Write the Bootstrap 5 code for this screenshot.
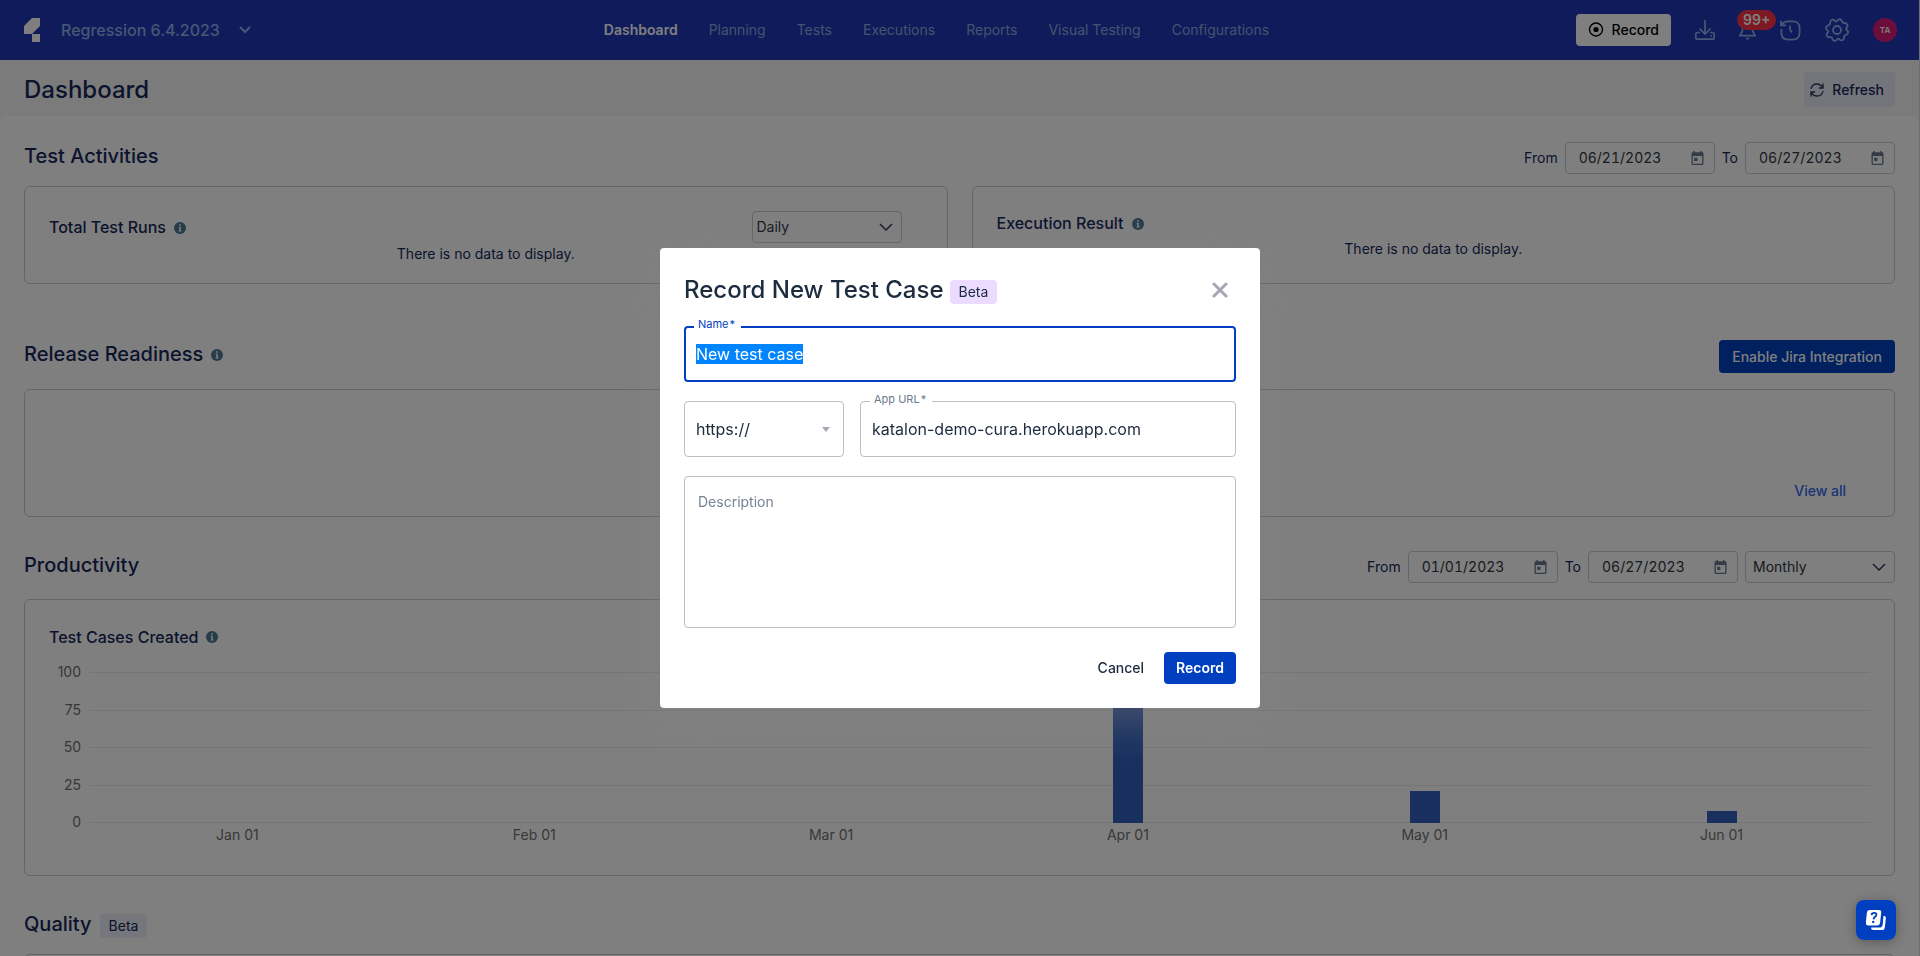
<!DOCTYPE html>
<html lang="en">
<head>
<meta charset="utf-8">
<meta name="viewport" content="width=device-width, initial-scale=1">
<title>Dashboard</title>
<link href="https://cdn.jsdelivr.net/npm/bootstrap@5.3.0/dist/css/bootstrap.min.css" rel="stylesheet">
<style>
:root { --navy: #16275a; --brand: #0040c0; --line: #c9cbd0; }
body { font-family: Inter, "Liberation Sans", sans-serif; font-size: 14px; line-height: 20px; color: var(--navy); background: #f7f7f7; }
svg { display: block; flex: none; }
h1, h2, h3 { margin: 0; font-weight: 500; color: var(--navy); }
h1 { font-size: 24px; line-height: 32px; }
h2 { font-size: 20px; line-height: 28px; }
h3 { font-size: 16px; line-height: 24px; }
.page-shell { border-right: 1px solid #d5dbe4; height: 100vh; overflow: hidden; }
.topbar { height: 60px; background: #2036b8; padding: 0 22px 0 24px; }
.side-start { flex: 1 1 0; }
.side-end { flex: 1 1 48px; gap: 24px; }
.project-btn { font-size: 16px; font-weight: 500; color: #fff; margin-left: 21px; gap: 19px; }
.topbar .nav { gap: 31px; }
.topbar .nav-link { padding: 0; color: #88a8dc; line-height: 20px; }
.topbar .nav-link.active { color: #fff; font-weight: 600; }
.icon-btn { padding: 0; border: 0; background: none; color: #8bb0e8; position: relative; }
.record-top { background: #fff; color: #000; font-weight: 500; height: 32px; padding: 0 12px; border: 0; border-radius: 4px; gap: 8px; }
.count-pill { position: absolute; left: -2px; top: -10px; background: #fd3044; color: #fff; font-size: 14px; line-height: 20px; font-weight: 600; border-radius: 10px; padding: 0 6px; }
.avatar-dot { width: 24px; height: 24px; border-radius: 50%; border: 0; background: #d81b78; color: #fff; font-size: 8px; font-weight: 600; padding: 0; }
.titlebar { height: 56px; padding: 3px 24px 0; }
.refresh-btn { height: 35px; border: 0; border-radius: 4px; background: #e8ebf5; color: var(--navy); font-weight: 500; padding: 0 11px 0 6px; gap: 8px; }
.board { background: #fff; border-radius: 6px 6px 0 0; padding: 26px 24px 0; }
.section-gap { margin-top: 34px; }
.tools { gap: 7px; }
.panel { border: 1px solid var(--line); border-radius: 6px; }
.info { color: #4f7893; }
.date-box { width: 150px; height: 32px; border: 1px solid var(--line); border-radius: 4px; padding: 0 10px 0 13px; }
.date-box input { border: 0; background: none; color: #303540; padding: 0; width: 90px; font-size: 14px; outline: 0; font-variant-numeric: tabular-nums; }
.date-box button { padding: 0; border: 0; background: none; color: #69788f; }
.pick { width: 150px; height: 32px; border: 1px solid var(--line); border-radius: 4px; color: #303540; font-size: 14px; line-height: 20px; padding: 0 7px; appearance: none; background: url("data:image/svg+xml,%3Csvg xmlns='http://www.w3.org/2000/svg' width='14' height='8' fill='none' stroke='%23303c52' stroke-width='1.5'%3E%3Cpath d='M1 1l6 6 6-6'/%3E%3C/svg%3E") no-repeat right 8px center; }
.pick-tight { padding-left: 4px; }
.jira-btn { height: 33px; border: 0; border-radius: 4px; background: var(--brand); color: #fff; font-weight: 500; padding: 0 13px; }
.activity { min-height: 98px; padding: 24px 24px 0; }
.activity-head { padding-right: 21px; margin-bottom: 1px; }
.activity h3 + svg, h2 + svg { margin-top: 2px; }
.release { height: 128px; padding: 0 48px 15px; }
.release a { color: #336af0; font-weight: 500; text-decoration: none; }
.growth { height: 277px; padding: 25px 24px; }
.chart { margin-top: 13px; color: #6b6b6b; }
.y-axis { width: 32px; height: 170px; text-align: right; line-height: 20px; color: #707070; }
.plot { margin: 10px 0 0 8px; position: relative; }
.grid-lines { position: absolute; inset: 0; height: 151px; }
.grid-lines i { height: 1px; background: #eaeaea; }
.bars { height: 151px; position: relative; }
.bars div, .x-axis span { flex: 1 1 0; text-align: center; }
.bars i { display: block; width: 30px; margin: 0 auto; background: #3260bf; }
.x-axis { padding-top: 2px; color: #707070; }
.tag { display: inline-block; border-radius: 4px; line-height: 24px; padding: 0 9px; margin-top: 3px; color: var(--navy); background: #eaeef8; }
.help-fab { position: fixed; right: 24px; bottom: 16px; z-index: 1060; width: 40px; height: 40px; border: 0; border-radius: 8px; background: var(--brand); box-shadow: 0 2px 12px rgba(0,0,0,.3); padding: 0; }
.modal-dialog { max-width: 600px; }
.modal-content { border: 0; border-radius: 4px; padding: 24px; color: #1d2b3e; box-shadow: 0 12px 48px rgba(131,131,131,.45); }
.modal-content h1 { color: #1d2b3e; }
.modal-content .tag { background: #eadbff; color: #1d2b3e; margin-left: 6px; }
.dialog-head { padding-top: 2px; margin-bottom: 20px; }
.stack { gap: 19px; }
.field { position: relative; }
.field label { position: absolute; left: 10px; top: -9px; background: #fff; padding: 0 6px 0 4px; font-size: 11px; line-height: 14px; color: #6b7b8c; }
.field label span { margin-left: 1px; }
.field input, .field select, .field textarea { display: block; width: 100%; height: 56px; border: 1px solid #bfbfbf; border-radius: 4px; padding: 0 11px; font-size: 16px; line-height: 24px; color: #1d2b3e; background: #fff; outline: 0; }
.field input:focus { border: 2px solid var(--brand); padding: 0 10px; }
.field input:focus + label { color: var(--brand); }
.field select { appearance: none; background: #fff url("data:image/svg+xml,%3Csvg xmlns='http://www.w3.org/2000/svg' width='8' height='5' fill='%23a3a8b3'%3E%3Cpath d='M0 0h8L4 5z'/%3E%3C/svg%3E") no-repeat right 13px center; }
.field textarea { height: 152px; padding: 15px 13px; font-size: 14px; line-height: 20px; resize: none; }
.field textarea::placeholder { color: #758494; opacity: 1; }
.field ::selection { background: rgba(0,133,255,.996); color: #fff; }
.scheme { width: 160px; }
.dialog-btn { height: 32px; border: 0; border-radius: 4px; font-weight: 500; padding: 0 12px; color: #1d2b3e; background: none; }
.dialog-btn.main-act { background: var(--brand); color: #fff; font-weight: 600; }
.close-x { border: 0; background: none; padding: 0; color: #a6a6b4; margin-right: 8px; }
</style>
</head>
<body class="modal-open overflow-hidden">
<svg width="0" height="0" class="position-absolute" aria-hidden="true">
  <symbol id="i-info" viewBox="0 0 12 12"><circle cx="6" cy="6" r="6" fill="currentColor"/><path fill="#fff" d="M5.2 2.3h1.6v1.5H5.2zM4.6 4.8h2.2v3.6h.7v1H4.6v-1h.7V5.800h-.7z"/></symbol>
  <symbol id="i-cal" viewBox="0 0 12 14"><path fill="currentColor" fill-rule="evenodd" d="M2 0h1.400v1.200h5.200V0H10v1.200h.7c.8 0 1.300.6 1.300 1.300v10c0 .8-.5 1.500-1.300 1.500H1.300C.5 14 0 13.300 0 12.500v-10c0-.7.5-1.300 1.300-1.300H2zM1.300 5v7.700h9.400V5zM2.700 6.800h3.200V10H2.700z"/></symbol>
</svg>

<div class="page-shell">
  <header class="topbar d-flex align-items-center">
    <div class="side-start d-flex align-items-center">
      <svg width="16" height="24" viewBox="0 0 16 24" fill="#fff" role="img" aria-label="Logo"><path d="M8 0h8v8l-8 8H0V8zM8 16h8v8H8z"/></svg>
      <button class="icon-btn project-btn d-flex align-items-center" type="button">Regression 6.4.2023
        <svg width="12" height="8" fill="none" stroke="currentColor" stroke-width="2"><path d="M1 1l5 5 5-5"/></svg></button>
    </div>
    <nav class="nav flex-nowrap" aria-label="Main">
      <a class="nav-link active" href="#">Dashboard</a>
      <a class="nav-link" href="#">Planning</a>
      <a class="nav-link" href="#">Tests</a>
      <a class="nav-link" href="#">Executions</a>
      <a class="nav-link" href="#">Reports</a>
      <a class="nav-link text-nowrap" href="#">Visual Testing</a>
      <a class="nav-link" href="#">Configurations</a>
    </nav>
    <div class="side-end d-flex align-items-center justify-content-end">
      <button class="record-top d-flex align-items-center" type="button">
        <svg width="16" height="16" fill="none" stroke="#000" stroke-width="1.400"><circle cx="8" cy="7.500" r="6.500"/><circle cx="8" cy="7.500" r="2.600" fill="#000" stroke="none"/></svg>Record</button>
      <button class="icon-btn" type="button" aria-label="Downloads"><svg width="20" height="20" viewBox="0 0 20 20" fill="none" stroke="currentColor" stroke-width="1.700"><path d="M10 0v13.500M4.500 8.500 10 14l5.500-5.500M5 12.500H2.500c-1 0-1.700.7-1.700 1.700v3.300c0 1 .7 1.700 1.700 1.700h15c1 0 1.700-.7 1.700-1.700v-3.300c0-1-.7-1.700-1.700-1.700H15M15.500 16h1.500"/></svg></button>
      <button class="icon-btn" type="button" aria-label="Notifications"><svg width="17" height="20" viewBox="0 0 17 20" fill="none" stroke="currentColor" stroke-width="1.700"><path d="M8.500 1C5.500 1 3.500 3.200 3.500 6v4.500L1 15.700h15l-2.500-5.200V6c0-2.800-2-5-5-5z"/><path d="M6 17.800h5L8.500 20z" fill="currentColor" stroke="none"/></svg><span class="count-pill">99+</span></button>
      <button class="icon-btn" type="button" aria-label="History"><svg width="21" height="21" viewBox="0 0 21 21" fill="none" stroke="currentColor" stroke-width="1.800"><path d="M1.400 9V13c0 4 2.500 6.600 6.600 6.600h5c4 0 6.600-2.600 6.600-6.600V8c0-4-2.600-6.600-6.600-6.600H8C5.500 1.400 3.300 2.400 1.800 4.700M1 .8v4.500h5M10 5.500v3.800c0 1.300.5 2 2 3"/></svg></button>
      <button class="icon-btn" type="button" aria-label="Settings"><svg width="24" height="24" viewBox="0 0 24 24" fill="none" stroke="currentColor" stroke-width="1.800"><circle cx="12" cy="12" r="4"/><path d="M9.600 2.600C8 .7 5 2.200 5.200 4.600 5.300 6.600 4.300 7.200 3 7.500.6 8.300.4 11 2.200 12c1.400.9 1.400 1.800.2 3-1.700 1.700-.3 4.700 2.300 4.200 1.700-.3 2.500.3 2.800 1.700.6 2.300 3.200 2.600 4.500.7.900-1.200 1.600-1.200 2.700 0 1.700 1.700 4.500.5 4.300-2.200-.1-1.700.5-2.200 2-2.500 2.300-.6 2.900-3.200 1-4.700-1.300-1-1.300-1.600-.2-2.700C23.500 7.700 22 5 19.700 5c-2.200 0-2.600-.8-3-2.200-.7-2-3.300-2-4.300-.3-.9 1.300-1.800 1.300-2.800.1z"/></svg></button>
      <button class="avatar-dot" type="button">TA</button>
    </div>
  </header>

  <div class="titlebar d-flex align-items-center justify-content-between">
    <h1>Dashboard</h1>
    <button class="refresh-btn d-flex align-items-center" type="button"><svg width="14" height="14" viewBox="0 0 14 14" fill="none" stroke="#303c58" stroke-width="1.400"><path d="M1 6C1.500 3 4 1 7 1c2 0 4 1 5.500 3.200M13 .5V5H8.800M13 8c-.5 3-3 5-6 5-2 0-4-1-5.500-3.200M1 13.500V9h4.200"/></svg>Refresh</button>
  </div>

  <main class="board">
    <section>
      <div class="d-flex justify-content-between">
        <h2>Test Activities</h2>
        <div class="tools d-flex align-items-center">
          <label for="act-from">From</label>
          <div class="date-box d-flex align-items-center justify-content-between"><input id="act-from" value="06/21/2023"><button type="button" aria-label="Pick start date"><svg width="13" height="14"><use href="#i-cal"/></svg></button></div>
          <label for="act-to">To</label>
          <div class="date-box d-flex align-items-center justify-content-between"><input id="act-to" value="06/27/2023"><button type="button" aria-label="Pick end date"><svg width="13" height="14"><use href="#i-cal"/></svg></button></div>
        </div>
      </div>
      <div class="row gx-4 mt-2 pt-1">
        <div class="col-6"><div class="panel activity">
          <div class="activity-head d-flex justify-content-between">
            <div class="d-flex align-items-center gap-2"><h3>Total Test Runs</h3><svg class="info" width="12" height="12"><use href="#i-info"/></svg></div>
            <select class="pick pick-tight" aria-label="Total test runs period"><option>Daily</option><option>Weekly</option></select>
          </div>
          <div class="text-center">There is no data to display.</div>
        </div></div>
        <div class="col-6"><div class="panel activity">
          <div class="d-flex align-items-center gap-2 mb-1"><h3>Execution Result</h3><svg class="info" width="12" height="12"><use href="#i-info"/></svg></div>
          <div class="text-center">There is no data to display.</div>
        </div></div>
      </div>
    </section>

    <section class="mt-5 pt-2">
      <div class="d-flex justify-content-between align-items-start">
        <div class="d-flex align-items-center gap-2"><h2>Release Readiness</h2><svg class="info" width="12" height="12"><use href="#i-info"/></svg></div>
        <button class="jira-btn" type="button">Enable Jira Integration</button>
      </div>
      <div class="panel release d-flex justify-content-end align-items-end mt-3"><a href="#">View all</a></div>
    </section>

    <section class="section-gap">
      <div class="d-flex justify-content-between align-items-start">
        <h2>Productivity</h2>
        <div class="tools d-flex align-items-center">
          <label for="prod-from">From</label>
          <div class="date-box d-flex align-items-center justify-content-between"><input id="prod-from" value="01/01/2023"><button type="button" aria-label="Pick start date"><svg width="13" height="14"><use href="#i-cal"/></svg></button></div>
          <label for="prod-to">To</label>
          <div class="date-box d-flex align-items-center justify-content-between"><input id="prod-to" value="06/27/2023"><button type="button" aria-label="Pick end date"><svg width="13" height="14"><use href="#i-cal"/></svg></button></div>
          <select class="pick" aria-label="Productivity period"><option>Monthly</option><option>Weekly</option></select>
        </div>
      </div>
      <div class="panel growth mt-3">
        <div class="d-flex align-items-center gap-2"><h3>Test Cases Created</h3><svg class="info" width="12" height="12"><use href="#i-info"/></svg></div>
        <div class="chart d-flex">
          <div class="y-axis d-flex flex-column justify-content-between"><span>100</span><span>75</span><span>50</span><span>25</span><span>0</span></div>
          <div class="plot flex-grow-1">
            <div class="grid-lines d-flex flex-column justify-content-between"><i></i><i></i><i></i><i></i><i></i></div>
            <div class="bars d-flex align-items-end" id="bars"></div>
            <div class="x-axis d-flex" id="months"></div>
          </div>
        </div>
      </div>
    </section>

    <section class="section-gap">
      <div class="d-flex align-items-center gap-2"><h2>Quality</h2><span class="tag">Beta</span></div>
      <div class="panel release mt-3"></div>
    </section>
  </main>
</div>

<button class="help-fab d-flex align-items-center justify-content-center" type="button" aria-label="Help">
  <svg width="20" height="20" viewBox="0 0 20 20"><path fill="#fff" d="M17.500 6c1.600-.1 2.500.7 2.300 2.400l-1 9c-.2 1.600-1.200 2.600-2.800 2.600H7.500C5.800 20 5 19.200 5.100 17.500h8c2.200 0 3.400-1 3.600-3.100zM3.800 0h9c1.800 0 2.600.9 2.400 2.700l-1.100 10c-.2 1.800-1.200 2.700-3 2.700h-9C.4 15.400-.4 14.500-.2 12.700L.900 2.700C1.100.900 2 0 3.800 0z"/><path d="M5.500 5.200c.2-1.700 1.200-2.400 2.600-2.400 1.500 0 2.400.7 2.300 2-.2 2-2.600 1.900-2.900 4.500" fill="none" stroke="#0040c0" stroke-width="1.800"/><circle cx="7.200" cy="11.900" r="1.200" fill="#0040c0"/></svg>
</button>

<div class="modal-backdrop show"></div>
<div class="modal show d-block" role="dialog" aria-modal="true" aria-labelledby="dlg-title">
  <div class="modal-dialog modal-dialog-centered">
    <form class="modal-content">
      <div class="dialog-head d-flex align-items-center">
        <h1 id="dlg-title">Record New Test Case</h1><span class="tag">Beta</span>
        <button class="close-x ms-auto" type="button" aria-label="Close"><svg width="16" height="16" fill="none" stroke="currentColor" stroke-width="3" stroke-linecap="round"><path d="M2 2l12 12M14 2 2 14"/></svg></button>
      </div>
      <div class="stack d-flex flex-column">
        <div class="field"><input id="case-name" value="New test case"><label for="case-name">Name<span>*</span></label></div>
        <div class="d-flex gap-3">
          <div class="field scheme"><select aria-label="Protocol"><option>https://</option><option>http://</option></select></div>
          <div class="field flex-grow-1"><input id="case-url" value="katalon-demo-cura.herokuapp.com"><label for="case-url">App URL<span>*</span></label></div>
        </div>
        <div class="field"><textarea placeholder="Description" aria-label="Description"></textarea></div>
      </div>
      <div class="d-flex justify-content-end gap-2 mt-4">
        <button class="dialog-btn" type="button">Cancel</button>
        <button class="dialog-btn main-act" type="button">Record</button>
      </div>
    </form>
  </div>
</div>

<script src="https://cdn.jsdelivr.net/npm/bootstrap@5.3.0/dist/js/bootstrap.bundle.min.js"></script>
<script>
const created = [['Jan 01', 0], ['Feb 01', 0], ['Mar 01', 0], ['Apr 01', 96], ['May 01', 21], ['Jun 01', 8]];
document.getElementById('bars').innerHTML = created.map(([, n]) => `<div class="h-100 d-flex align-items-end"><i style="height:${n}%"></i></div>`).join('');
document.getElementById('months').innerHTML = created.map(([m]) => `<span>${m}</span>`).join('');
const nameBox = document.getElementById('case-name');
nameBox.focus();
nameBox.select();
</script>
</body>
</html>
